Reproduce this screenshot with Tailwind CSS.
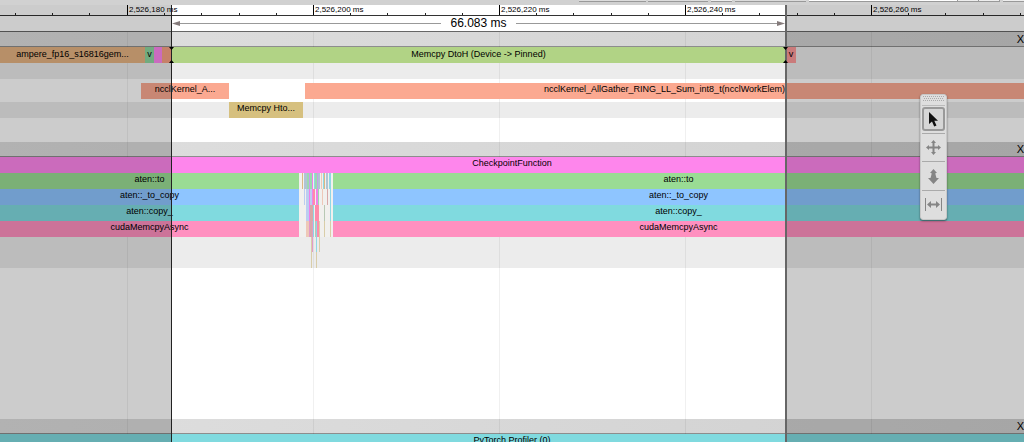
<!DOCTYPE html>
<html lang="en">
<head>
<meta charset="utf-8">
<title>Trace viewer</title>
<script src="https://cdn.jsdelivr.net/npm/@tailwindcss/browser@4"></script>
</head>
<body class="bg-white">
<main class="relative isolate flex h-screen flex-col overflow-hidden bg-white font-['Liberation_Sans',Arial,sans-serif] text-[9px] leading-[13px] text-black">

  <!-- Lower edge of the control bar -->
  <div class="flex h-[5px] shrink-0 items-start bg-[#d1d1d1]">
    <div class="flex-579"></div>
    <div class="h-[2px] flex-67 bg-[#dcdcdc] shadow-[inset_0_-1px_#999]"></div>
    <div class="flex-2"></div>
    <div class="h-[2px] flex-60 bg-[#dcdcdc] shadow-[inset_0_-1px_#999]"></div>
    <div class="flex-3"></div>
    <div class="h-[2px] flex-21 bg-[#eee] shadow-[inset_0_-1px_#999]"></div>
    <div class="flex-3"></div>
    <div class="h-[2px] flex-71 bg-[#dcdcdc] shadow-[inset_0_-1px_#999]"></div>
    <div class="flex-3"></div>
    <div class="h-[2px] flex-149 bg-white shadow-[inset_-1px_-1px_#999]"></div>
    <div class="h-[2px] flex-21 bg-[#eee] shadow-[inset_-1px_-1px_#999]"></div>
    <div class="h-[2px] flex-21 bg-[#eee] shadow-[inset_-1px_-1px_#999]"></div>
    <div class="flex-3"></div>
    <div class="h-[2px] flex-21 bg-[#eee] shadow-[inset_0_-1px_#999]"></div>
  </div>

  <!-- Time ruler -->
  <div class="flex h-[11px] shrink-0 border-b border-[#333] text-[8px] leading-[9px]">
    <div class="flex min-w-0 flex-127 items-end">
      <div class="flex-15"></div><div class="h-[2px] flex-37 shadow-[inset_1px_0_#222]"></div><div class="h-[2px] flex-37 shadow-[inset_1px_0_#222]"></div><div class="h-[2px] flex-38 shadow-[inset_1px_0_#222]"></div>
    </div>
    <div class="relative z-30 flex min-w-0 flex-186 items-end shadow-[inset_1px_0_black]">
      <span class="w-0 self-start whitespace-nowrap pl-[2px]">2,526,180&nbsp;ms</span>
      <div class="flex-35"></div><div class="h-[2px] flex-37 shadow-[inset_1px_0_#222]"></div><div class="h-[2px] flex-37 shadow-[inset_1px_0_#222]"></div><div class="h-[2px] flex-37 shadow-[inset_1px_0_#222]"></div><div class="h-[2px] flex-37 shadow-[inset_1px_0_#222]"></div>
    </div>
    <div class="flex min-w-0 flex-186 items-end shadow-[inset_1px_0_black]">
      <span class="w-0 self-start whitespace-nowrap pl-[2px]">2,526,200&nbsp;ms</span>
      <div class="flex-35"></div><div class="h-[2px] flex-37 shadow-[inset_1px_0_#222]"></div><div class="h-[2px] flex-37 shadow-[inset_1px_0_#222]"></div><div class="h-[2px] flex-37 shadow-[inset_1px_0_#222]"></div><div class="h-[2px] flex-37 shadow-[inset_1px_0_#222]"></div>
    </div>
    <div class="flex min-w-0 flex-186 items-end shadow-[inset_1px_0_black]">
      <span class="w-0 self-start whitespace-nowrap pl-[2px]">2,526,220&nbsp;ms</span>
      <div class="flex-35"></div><div class="h-[2px] flex-37 shadow-[inset_1px_0_#222]"></div><div class="h-[2px] flex-37 shadow-[inset_1px_0_#222]"></div><div class="h-[2px] flex-37 shadow-[inset_1px_0_#222]"></div><div class="h-[2px] flex-37 shadow-[inset_1px_0_#222]"></div>
    </div>
    <div class="flex min-w-0 flex-186 items-end shadow-[inset_1px_0_black]">
      <span class="w-0 self-start whitespace-nowrap pl-[2px]">2,526,240&nbsp;ms</span>
      <div class="flex-35"></div><div class="h-[2px] flex-37 shadow-[inset_1px_0_#222]"></div><div class="h-[2px] flex-37 shadow-[inset_1px_0_#222]"></div><div class="h-[2px] flex-37 shadow-[inset_1px_0_#222]"></div><div class="h-[2px] flex-37 shadow-[inset_1px_0_#222]"></div>
    </div>
    <div class="flex min-w-0 flex-153 items-end shadow-[inset_1px_0_black]">
      <span class="w-0 self-start whitespace-nowrap pl-[2px]">2,526,260&nbsp;ms</span>
      <div class="flex-35"></div><div class="h-[2px] flex-37 shadow-[inset_1px_0_#222]"></div><div class="h-[2px] flex-37 shadow-[inset_1px_0_#222]"></div><div class="h-[2px] flex-37 shadow-[inset_1px_0_#222]"></div><div class="h-[2px] flex-4 shadow-[inset_1px_0_#222]"></div>
    </div>
  </div>

  <!-- Selected duration -->
  <div class="flex h-4 shrink-0 border-b border-[#666]">
    <div class="flex-172"></div>
    <div class="flex flex-613 items-center">
      <svg class="h-[5px] w-2" viewBox="0 0 8 5"><path d="M0 2.5 8 0v5z" fill="#857b7b"/></svg>
      <div class="h-px flex-1 bg-[#999]"></div>
      <span class="px-[9px] text-[12px] leading-[15px]">66.083 ms</span>
      <div class="h-px flex-1 bg-[#999]"></div>
      <svg class="h-[5px] w-2" viewBox="0 0 8 5"><path d="M8 2.5 0 0v5z" fill="#857b7b"/></svg>
    </div>
    <div class="flex-239"></div>
  </div>

  <!-- GPU process -->
  <section class="shrink-0">
    <div class="flex h-[15px] items-center justify-end border-b border-[#8d8d8d] bg-linear-to-r from-[#dfdfdf] to-[#d0d0d0]">
      <button type="button" aria-label="Close track" class="relative z-30 text-[11px] leading-[14px]">X</button>
    </div>
    <div class="h-8 bg-[#ececec]">
      <div class="relative z-10 flex h-4 text-center leading-[14px]">
        <div class="min-w-0 flex-145 bg-[#e5b383]">ampere_fp16_s16816gem...</div>
        <div class="min-w-0 flex-9 bg-[#8ed69f]">v</div>
        <div class="flex-8 bg-[#fd86ef]"></div>
        <div class="flex-9 bg-[#f8a284]"></div>
        <div class="min-w-0 flex-615 bg-[#b1d385]">Memcpy DtoH (Device -&gt; Pinned)</div>
        <div class="min-w-0 flex-10 bg-[#fd9a9a]">v</div>
        <div class="flex-228"></div>
      </div>
    </div>
    <div class="h-[23px] pt-1">
      <div class="relative z-10 flex h-4 text-center">
        <div class="flex-141"></div>
        <div class="min-w-0 flex-88 bg-[#fba991]">ncclKernel_A...</div>
        <div class="flex-76"></div>
        <div class="min-w-0 flex-719 bg-[#fba991]">ncclKernel_AllGather_RING_LL_Sum_int8_t(ncclWorkElem)</div>
      </div>
    </div>
    <div class="h-4 bg-[#ececec]">
      <div class="relative z-10 flex h-4 text-center">
        <div class="flex-229"></div>
        <div class="min-w-0 flex-74 bg-[#d6c07f]">Memcpy Hto...</div>
        <div class="flex-721"></div>
      </div>
    </div>
    <div class="h-6"></div>
  </section>

  <!-- CPU process -->
  <section class="shrink-0">
    <div class="flex h-[15px] items-center justify-end border-b border-[#8d8d8d] bg-linear-to-r from-[#dfdfdf] to-[#d0d0d0]">
      <button type="button" aria-label="Close track" class="relative z-30 text-[11px] leading-[14px]">X</button>
    </div>
    <div class="bg-[#ececec]">
      <div class="relative z-10 h-4 bg-[#fe86ec] text-center">CheckpointFunction</div>
      <div class="relative z-10 flex h-[95px] text-center">
        <div class="flex min-w-0 flex-299 flex-col">
          <div class="h-4 bg-[#9adc94]">aten::to</div>
          <div class="h-4 bg-[#8ec5ff]">aten::_to_copy</div>
          <div class="h-4 bg-[#80dadf]">aten::copy_</div>
          <div class="h-4 bg-[#ff90c0]">cudaMemcpyAsync</div>
        </div>
        <!-- Short calls between the two copies -->
        <svg class="h-[95px] min-w-0 flex-34" viewBox="0 0 34 95" preserveAspectRatio="none" shape-rendering="crispEdges" aria-hidden="true">
          <path fill="#f1f0ee" d="M0 0h34v64H0z"/>
          <path fill="#dcb884" d="M3 0h1v16H3zM25 0h1v16h-1z"/>
          <path fill="#b0c4d4" d="M5 0h3v16H5zM19 0h2v16h-2zM27 0h2v16h-2z"/>
          <path fill="#bccdf0" d="M5 16h1v16H5zM7 16h3v32H7zM11 16h2v16h-2z"/>
          <path fill="#9cd8b0" d="M8 0h2v16H8zM11 0h2v16h-2zM16 0h2v16h-2zM19 16h1v16h-1z"/>
          <path fill="#c6a0e8" d="M10 0h1v16h-1zM18 0h1v16h-1z"/>
          <path fill="#ef82ea" d="M13 0h1v32h-1zM10 16h1v32h-1zM17 16h2v16h-2z"/>
          <path fill="#ff8aaa" d="M14 16h2v16h-2zM16 32h4v16h-4zM18 48h2v16h-2z"/>
          <path fill="#eec8b8" d="M7 48h3v16H7zM22 0h1v16h-1zM23 16h1v16h-1z"/>
          <path fill="#d8a8a8" d="M11 32h3v32h-3zM28 16h1v16h-1z"/>
          <path fill="#e29ac8" d="M10 48h1v16h-1zM13 48h1v31h-1z"/>
          <path fill="#8fd8e4" d="M15 0h1v16h-1zM14 32h1v32h-1zM17 48h1v31h-1zM30 0h2v16h-2zM31 16h1v32h-1zM24 0h1v16h-1z"/>
          <path fill="#b8c8b4" d="M16 48h1v16h-1zM25 32h1v16h-1z"/>
          <path fill="#d9cda8" d="M12 64h1v31h-1zM17 79h1v16h-1zM20 48h1v31h-1zM25 48h1v16h-1zM31 48h1v16h-1z"/>
        </svg>
        <div class="flex min-w-0 flex-691 flex-col">
          <div class="h-4 bg-[#9adc94]">aten::to</div>
          <div class="h-4 bg-[#8ec5ff]">aten::_to_copy</div>
          <div class="h-4 bg-[#80dadf]">aten::copy_</div>
          <div class="h-4 bg-[#ff90c0]">cudaMemcpyAsync</div>
        </div>
      </div>
    </div>
  </section>

  <div class="min-h-0 flex-1"></div>

  <!-- Profiler process -->
  <section class="shrink-0">
    <div class="flex h-[15px] items-center justify-end border-b border-[#8d8d8d] bg-linear-to-r from-[#dfdfdf] to-[#d0d0d0]">
      <button type="button" aria-label="Close track" class="relative z-30 text-[11px] leading-[14px]">X</button>
    </div>
    <div class="relative z-10 h-2 overflow-hidden bg-[#80dadf] text-center">PyTorch Profiler (0)</div>
  </section>

  <!-- Grid lines -->
  <div class="pointer-events-none absolute inset-x-0 top-8 bottom-0 flex">
    <div class="flex-127"></div>
    <div class="flex-186 shadow-[inset_1px_0_rgba(0,0,0,0.06)]"></div>
    <div class="flex-186 shadow-[inset_1px_0_rgba(0,0,0,0.06)]"></div>
    <div class="flex-186 shadow-[inset_1px_0_rgba(0,0,0,0.06)]"></div>
    <div class="flex-186 shadow-[inset_1px_0_rgba(0,0,0,0.06)]"></div>
    <div class="flex-153 shadow-[inset_1px_0_rgba(0,0,0,0.06)]"></div>
  </div>

  <!-- Shade outside the selected range -->
  <div class="pointer-events-none absolute inset-x-0 top-[5px] bottom-0 z-20 flex">
    <div class="flex-172 bg-black/20"></div>
    <div class="flex flex-615 justify-between border-l border-r-2 border-l-[#222] border-r-[#666] pt-[42px]">
      <svg class="-ml-[3px] h-4 w-[5px]" viewBox="0 0 5 16"><path d="M0 0h5L2.500 3zM0 16h5L2.500 13z"/></svg>
      <svg class="-mr-[3px] h-4 w-[5px]" viewBox="0 0 5 16"><path d="M0 0h5L2.500 3zM0 16h5L2.500 13z"/></svg>
    </div>
    <div class="flex-238 bg-black/20"></div>
  </div>

  <!-- Floating mouse mode palette -->
  <div role="toolbar" aria-label="Mouse mode" class="absolute top-[94px] right-[77px] z-40 flex w-[27px] flex-col rounded-[3px] border border-[#c8c8c8] bg-[#dedede] px-px pb-px text-[#858585] shadow-[0_1px_2px_rgba(0,0,0,0.5)]">
    <svg class="mx-auto mt-px mb-[3px] h-[6px] w-[21px]" viewBox="0 0 21 6" fill="none" stroke="#aaa" stroke-dasharray="1 1"><path d="M0 .5h21M1 2.500h21M0 4.500h21"/></svg>
    <div class="mb-px h-px bg-[#bbb]"></div>
    <button type="button" aria-label="Selection" aria-pressed="true" class="flex h-6 items-center justify-center rounded-[3px] border-2 border-[#999] bg-[#d6d6d6] text-[#111]">
      <svg class="h-[15px] w-[11px]" viewBox="0 0 11 15" fill="currentColor"><path d="M1 0v12l3-2.500 2.200 5 2.300-1-2.200-4.800H10z"/></svg>
    </button>
    <button type="button" aria-label="Pan" class="mt-[2px] flex h-7 items-center justify-center border-t border-[#aaa]">
      <svg class="size-[15px]" viewBox="0 0 15 15" fill="currentColor"><path d="M7.500 0 10 3H8.500v3.500H12V5l3 2.500L12 10V8.500H8.500V12H10l-2.500 3L5 12h1.500V8.500H3V10L0 7.500 3 5v1.500h3.500V3H5z"/></svg>
    </button>
    <button type="button" aria-label="Zoom" class="flex h-[29px] items-center justify-center border-t border-[#aaa]">
      <svg class="h-[15px] w-[11px]" viewBox="0 0 11 15" fill="currentColor"><path d="M5.500 0 9 4H7.500v1.500L8.500 9H11l-5.500 6L0 9h2.500l1-3.500V4H2z"/></svg>
    </button>
    <button type="button" aria-label="Timing" class="flex h-7 items-center justify-center border-t border-[#aaa]">
      <svg class="h-[13px] w-[17px]" viewBox="0 0 17 13" fill="currentColor"><path d="M0 0h1v13H0zM16 0h1v13h-1zM2 6.500 6 3v2.500h5V3l4 3.500L11 10V7.500H6V10z"/></svg>
    </button>
  </div>
</main>
</body>
</html>
